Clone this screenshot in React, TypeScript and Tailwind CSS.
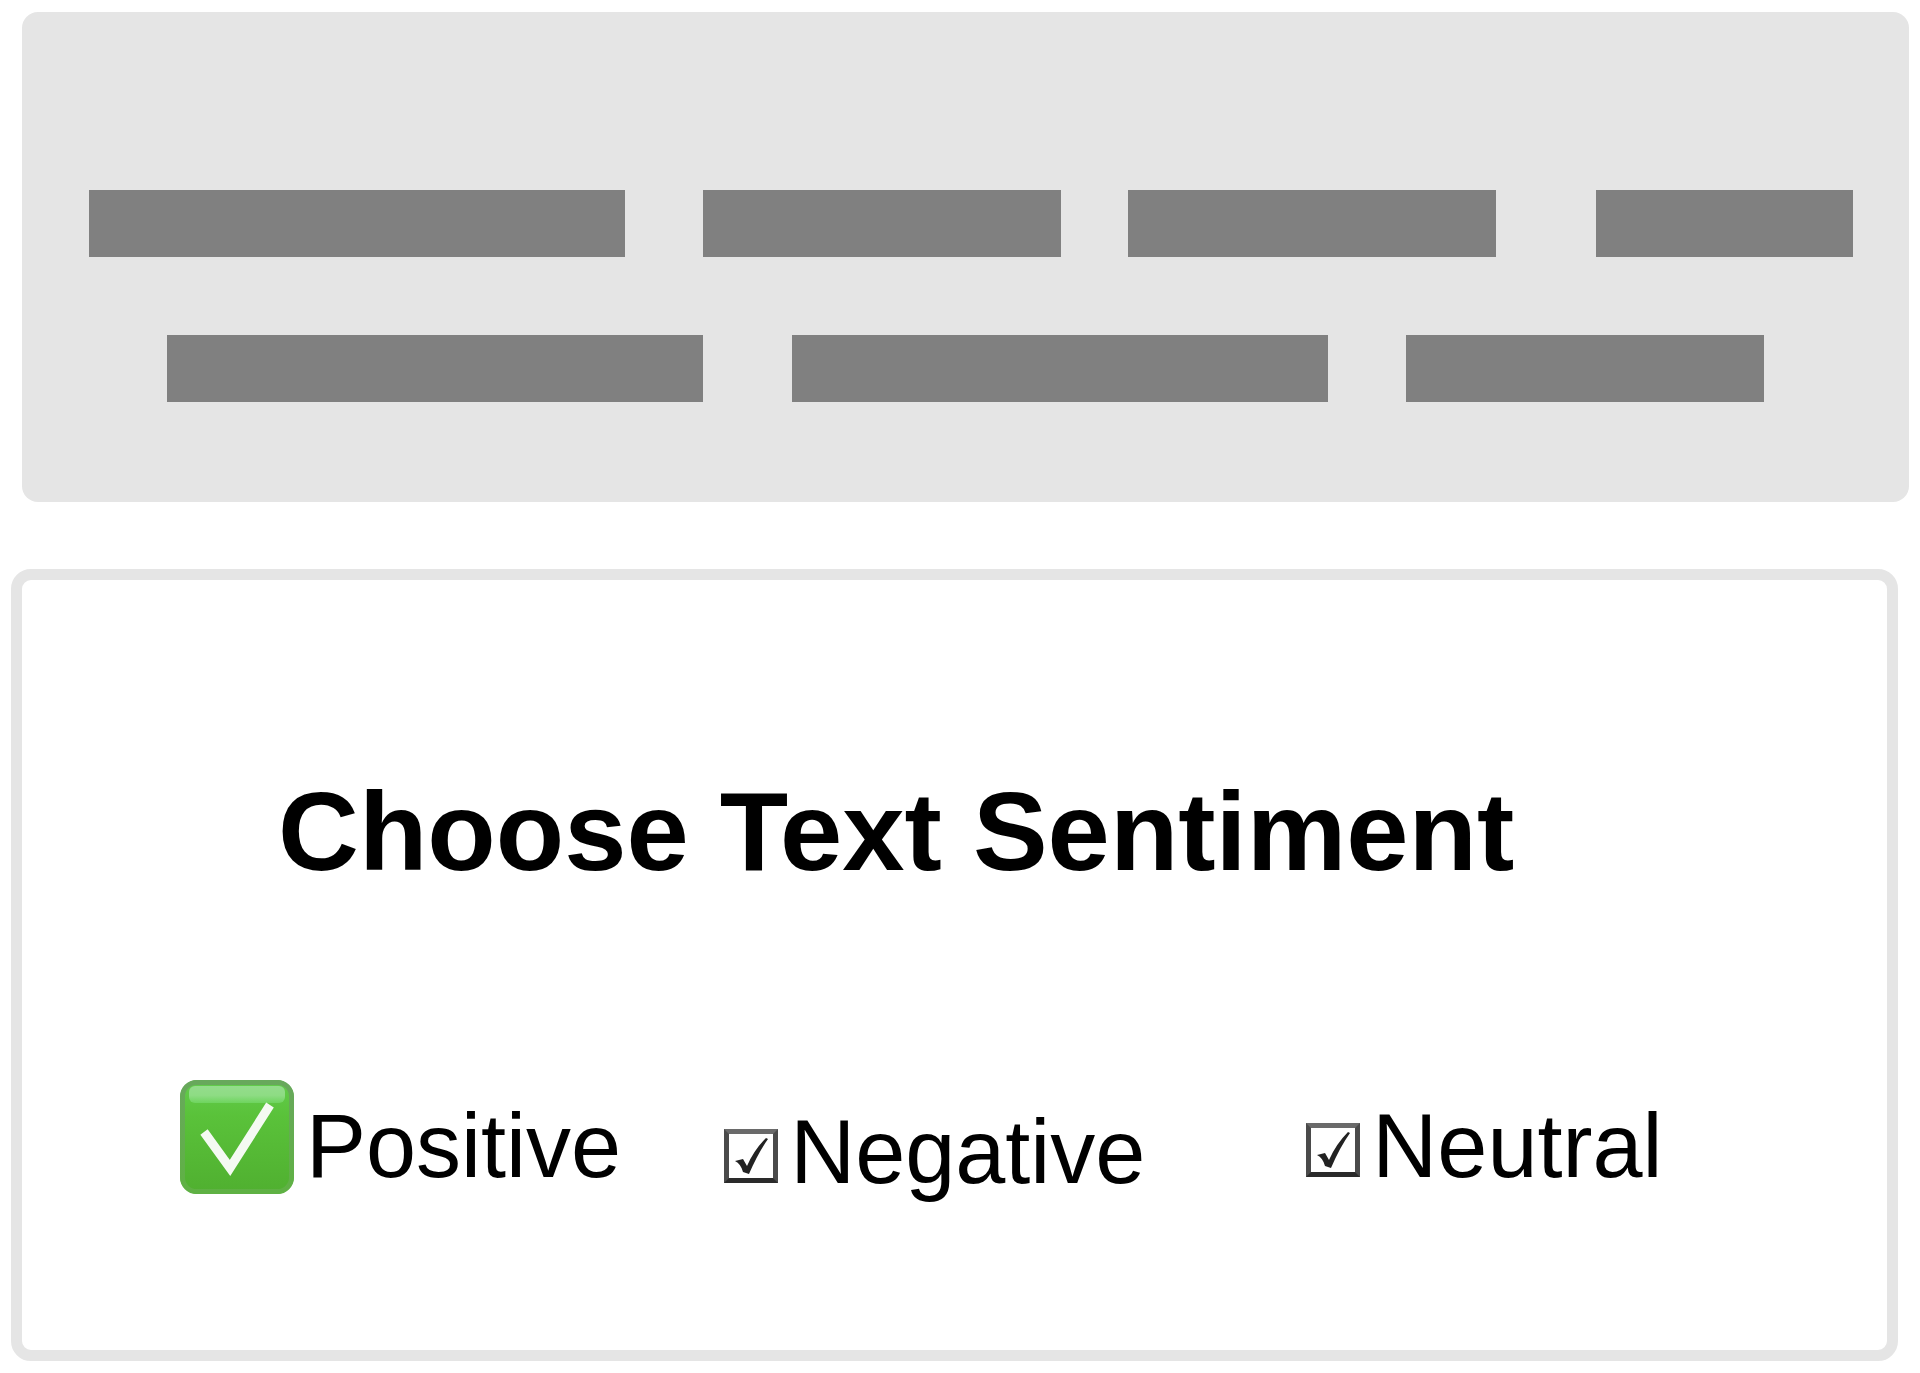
const BAR = 'h-[67px] bg-[#808080]';

function TextPlaceholder() {
  return (
    <section aria-label="Text" className="ml-[11px] -mr-[11px] rounded-[16px] bg-[#e5e5e5] pt-[178px] pb-[100px]">
      <div className="flex pr-14 pl-[67px]">
        <div className={BAR + ' mr-[78px] flex-[536]'} />
        <div className={BAR + ' mr-[67px] flex-[357]'} />
        <div className={BAR + ' mr-[100px] flex-[368]'} />
        <div className={BAR + ' flex-[257]'} />
      </div>
      <div className="mt-[78px] flex px-[145px]">
        <div className={BAR + ' mr-[89px] flex-[536]'} />
        <div className={BAR + ' mr-[78px] flex-[536]'} />
        <div className={BAR + ' flex-[358]'} />
      </div>
    </section>
  );
}

function GreenBox() {
  return (
    <span className="relative mr-3 block size-[114px]">
      <input id="positive" type="checkbox" defaultChecked className="peer block size-full appearance-none rounded-[18px] bg-[#53b432]" />
      <svg viewBox="0 0 114 114" className="pointer-events-none absolute inset-0 hidden size-full peer-checked:block" aria-hidden="true">
        <defs>
          <linearGradient id="face" x1="0" y1="0" x2="0" y2="1">
            <stop offset="0" stopColor="#62cc4c" />
            <stop offset="0.3" stopColor="#5ac23a" />
            <stop offset="1" stopColor="#50b030" />
          </linearGradient>
          <linearGradient id="edge" x1="0" y1="0" x2="0" y2="1">
            <stop offset="0" stopColor="#68a85c" />
            <stop offset="1" stopColor="#5fb144" />
          </linearGradient>
          <linearGradient id="shine" x1="0" y1="0" x2="0" y2="1">
            <stop offset="0" stopColor="#94dc8c" />
            <stop offset="0.55" stopColor="#8edc84" />
            <stop offset="1" stopColor="#6ed45e" />
          </linearGradient>
        </defs>
        <rect x="2.5" y="2.5" width="109" height="109" rx="14" fill="url(#face)" stroke="url(#edge)" strokeWidth="5" />
        <rect x="9" y="6" width="96" height="17" rx="6" fill="url(#shine)" />
        <path d="M24 52 L50 88 L90 25" fill="none" stroke="#f4faf2" strokeWidth="9" />
      </svg>
    </span>
  );
}

function OutlineBox({ id }: { id: string }) {
  return (
    <span className="relative mr-3 mb-[17px] block size-[54px]">
      <input id={id} type="checkbox" defaultChecked className="peer block size-full appearance-none border-[5px] border-[#4a4a4a] border-t-[#6a6a6a] border-b-[#2a2a2a] bg-white" />
      <svg viewBox="0 0 54 54" className="pointer-events-none absolute inset-0 hidden size-full peer-checked:block" aria-hidden="true">
        <path d="M11 32 L19 30 L23 37 Q30 21 42 9 L44 10 Q34 24 25 45 L19 43 Q17 35 11 32 Z" fill="#222222" />
      </svg>
    </span>
  );
}

export default function App() {
  return (
    <main className="flex flex-col bg-white pt-3 pb-[11px] pr-[22px] pl-[11px] font-['Liberation_Sans',Arial,sans-serif] text-black">
      <TextPlaceholder />
      <form className="mt-[67px] rounded-[20px] border-[11px] border-[#e5e5e5] pt-[188px] pb-[150px] pl-[158px]">
        <fieldset>
          <legend className="ml-[98px] text-[112px] leading-[128px] font-bold whitespace-nowrap">Choose Text Sentiment</legend>
          <div className="mt-[184px] flex items-end">
            <label htmlFor="positive" className="mb-1.5 flex items-end text-[90px] leading-[96px] whitespace-nowrap">
              <GreenBox />
              Positive
            </label>
            <label htmlFor="negative" className="ml-[103px] flex items-end text-[90px] leading-[96px] whitespace-nowrap">
              <OutlineBox id="negative" />
              Negative
            </label>
            <label htmlFor="neutral" className="mb-1.5 ml-[161px] flex items-end text-[90px] leading-[96px] whitespace-nowrap">
              <OutlineBox id="neutral" />
              Neutral
            </label>
          </div>
        </fieldset>
      </form>
    </main>
  );
}
